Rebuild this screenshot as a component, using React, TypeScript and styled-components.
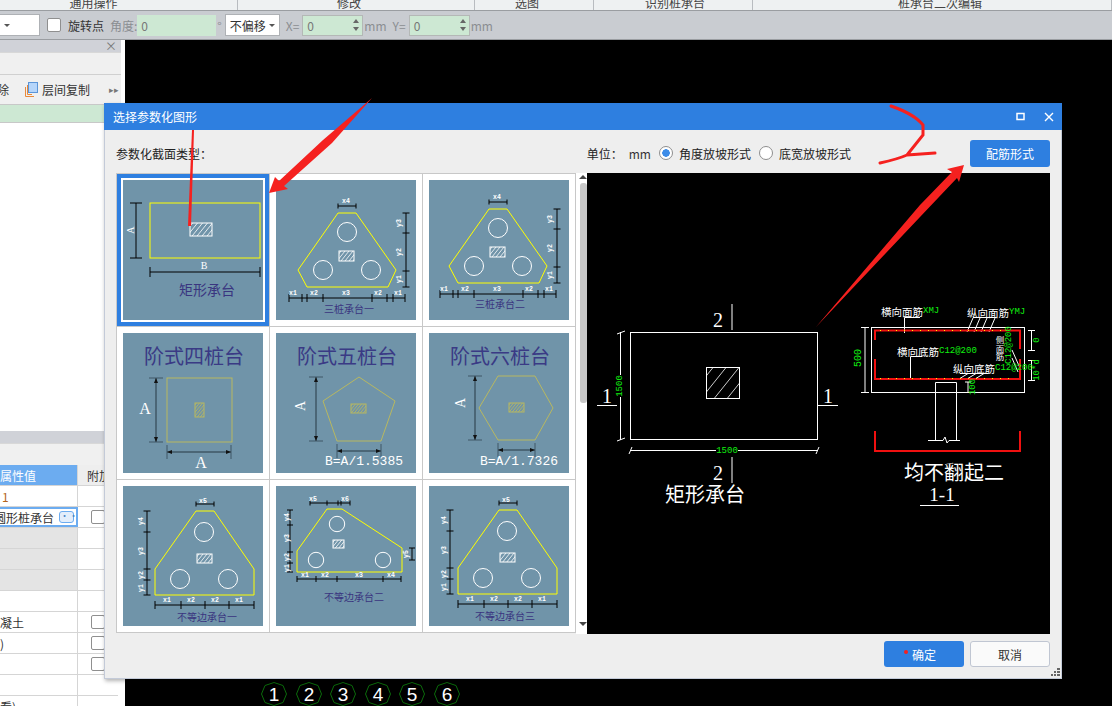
import React from 'react';
import styled, { createGlobalStyle } from 'styled-components';

const UI_FONT = `"Noto Sans CJK SC", "Liberation Sans", sans-serif`;
const MONO_FONT = `"Liberation Mono", "Noto Sans CJK SC", monospace`;
const SERIF_FONT = `"Liberation Serif", "Noto Sans CJK SC", serif`;
const CAD_GREEN = '#10f010';

const GlobalStyle = createGlobalStyle`
  html, body {
    margin: 0;
    background: #000;
    overflow: hidden;
  }
  * {
    box-sizing: border-box;
  }
`;

const Page = styled.div`
  position: relative;
  display: flex;
  flex-direction: column;
  width: 1112px;
  height: 706px;
  overflow: hidden;
  font-family: ${UI_FONT};
  font-size: 12px;
  color: #333;
  background: #000;
`;

/* ribbon strip, cut off by the top of the picture */
const Ribbon = styled.div`
  display: flex;
  flex: none;
  height: 11px;
  background: #eef1f2;
  border-bottom: 1px solid #9a9da1;
  overflow: hidden;
`;

const RibbonGroup = styled.div<{ $width: number; $padLeft?: number; $padRight?: number }>`
  display: flex;
  flex: none;
  align-items: flex-end;
  justify-content: center;
  width: ${({ $width }) => $width}px;
  height: 10px;
  padding-left: ${({ $padLeft }) => $padLeft ?? 0}px;
  padding-right: ${({ $padRight }) => $padRight ?? 0}px;
  line-height: 14px;
  border-right: 1px solid #b8bcc0;
  color: #444;
`;

const Toolbar = styled.div`
  display: flex;
  flex: none;
  align-items: center;
  height: 29px;
  background: #c9ccd1;
  border-bottom: 1px solid #9a9da1;
  color: #8b8e92;
`;

const Select = styled.div<{ $width: number; $left: number }>`
  display: flex;
  flex: none;
  align-items: center;
  justify-content: space-between;
  width: ${({ $width }) => $width}px;
  height: 22px;
  margin-left: ${({ $left }) => $left}px;
  padding: 0 4px;
  background: #fff;
  border: 1px solid #aeb1b5;
  color: #333;

  &::after {
    content: '';
    border-top: 3px solid #555;
    border-left: 3px solid transparent;
    border-right: 3px solid transparent;
  }
`;

const CheckBox = styled.span<{ $left?: number }>`
  display: block;
  flex: none;
  width: 14px;
  height: 14px;
  margin-left: ${({ $left }) => $left ?? 0}px;
  background: #fff;
  border: 1px solid #8f8f8f;
  border-radius: 2px;
`;

const ToolText = styled.span<{ $left: number; $dark?: boolean }>`
  flex: none;
  margin-left: ${({ $left }) => $left}px;
  color: ${({ $dark }) => ($dark ? '#333' : '#8b8e92')};
`;

const NumberInput = styled.div<{ $width: number; $left: number; $plain?: boolean }>`
  display: flex;
  flex: none;
  align-items: center;
  justify-content: space-between;
  width: ${({ $width }) => $width}px;
  height: 21px;
  margin-left: ${({ $left }) => $left}px;
  padding: 0 3px 0 4px;
  background: #cde8d3;
  border: ${({ $plain }) => ($plain ? '0' : '1px solid #b4b8b6')};
  color: #777;
`;

const Spinner = styled.span`
  display: flex;
  flex-direction: column;
  gap: 4px;

  &::before, &::after {
    content: '';
    border-left: 3px solid transparent;
    border-right: 3px solid transparent;
  }
  &::before {
    border-bottom: 4px solid #666;
  }
  &::after {
    border-top: 4px solid #666;
  }
`;

const Main = styled.div`
  display: flex;
  flex: 1;
  min-height: 0;
`;

const LeftPanel = styled.div`
  display: flex;
  flex: none;
  flex-direction: column;
  width: 125px;
  background: #fff;
  overflow: hidden;
`;

const PanelHeader = styled.div`
  display: flex;
  flex: none;
  align-items: center;
  justify-content: flex-end;
  width: 121px;
  height: 12px;
  padding-right: 4px;
  background: #d0d2d8;
  color: #777;
  font-size: 12px;
  line-height: 12px;
`;

const PanelBlank = styled.div<{ $height: number }>`
  flex: none;
  width: 121px;
  height: ${({ $height }) => $height}px;
  background: #f0f0f0;
  border-top: 1px solid #d8d8d8;
`;

const PanelTools = styled.div`
  display: flex;
  flex: none;
  align-items: center;
  width: 121px;
  height: 30px;
  background: #f0f0f0;
  border-top: 1px solid #d0d0d0;
`;

const ClippedText = styled.span`
  flex: none;
  margin-left: -3px;
`;

const CopyIcon = styled.svg`
  flex: none;
  margin: 0 4px 0 15px;
`;

const MoreArrows = styled.span`
  margin-right: 2px;
  color: #777;
  font-size: 9px;
`;

const GreenRow = styled.div`
  flex: none;
  width: 121px;
  height: 19px;
  background: #cde8d3;
  border-top: 1px solid #c8c8c8;
  border-bottom: 1px solid #c8c8c8;
`;

const ListArea = styled.div`
  flex: none;
  width: 121px;
  height: 308px;
  background: #fff;
`;

const TableRow = styled.div`
  display: flex;
  flex: none;
  width: 118px;
  height: 21px;
  border-bottom: 1px solid #d5d5d5;
`;

const ValueCell = styled.div<{ $gray?: boolean; $active?: boolean; $head?: boolean; $orange?: boolean }>`
  display: flex;
  flex: none;
  align-items: center;
  width: 78px;
  padding-left: ${({ $orange }) => ($orange ? 2 : 0)}px;
  background: ${({ $gray, $head }) => ($head ? '#6cacf0' : $gray ? '#e4e4e4' : '#fff')};
  border-right: 1px solid #d5d5d5;
  color: ${({ $head, $orange }) => ($head ? '#fff' : $orange ? '#b5651d' : '#333')};
  overflow: hidden;
  white-space: nowrap;
  ${({ $active }) => $active && 'border: 2px solid #6cacf0; border-left: 0; justify-content: flex-end; padding-right: 2px;'}
`;

const ExtraCell = styled.div<{ $head?: boolean }>`
  display: flex;
  flex: 1;
  align-items: center;
  padding-left: ${({ $head }) => ($head ? 9 : 13)}px;
  background: ${({ $head }) => ($head ? '#eeeeee' : '#fff')};
`;

const DotsButton = styled.span`
  flex: none;
  width: 15px;
  height: 12px;
  margin-left: 5px;
  background: #e3eefb;
  border: 1px solid #6cacf0;
  border-radius: 3px;
  color: #4a86c8;
  font-size: 9px;
  line-height: 7px;
  text-align: center;
`;

const Canvas = styled.div`
  display: flex;
  flex: 1;
  align-items: flex-end;
  gap: 8.6px;
  padding-left: 136px;
  background: #000;
`;

const BadgeSvg = styled.svg`
  display: block;
  flex: none;
  width: 26px;
  height: 24px;
`;

const Dialog = styled.div`
  position: absolute;
  left: 104px;
  top: 103px;
  display: flex;
  flex-direction: column;
  width: 958px;
  height: 576px;
  background: #eeeeee;
  border: 1px solid #c3cad8;
  border-top: 0;
  box-shadow: 1px 2px 4px rgba(0, 0, 0, 0.3);
`;

const TitleBar = styled.div`
  display: flex;
  flex: none;
  align-items: center;
  justify-content: space-between;
  height: 27px;
  margin: 0 -1px;
  padding: 0 8px 0 9px;
  background: #2e7fe0;
  color: #fff;
`;

const WindowButtons = styled.div`
  display: flex;
  align-items: center;
  gap: 19px;
`;

const DialogTop = styled.div`
  display: flex;
  flex: none;
  align-items: center;
  height: 43px;
  padding: 3px 11px 0;
  color: #222;
`;

const Spacer = styled.div`
  flex: 1;
`;

const RadioLabel = styled.span<{ $left: number }>`
  display: flex;
  align-items: center;
  gap: 6px;
  margin-left: ${({ $left }) => $left}px;
`;

const Radio = styled.span<{ $on?: boolean }>`
  display: block;
  flex: none;
  width: 14px;
  height: 14px;
  background: ${({ $on }) => ($on ? 'radial-gradient(circle, #3d8ce8 0 3.5px, #fff 4px)' : '#fff')};
  border: 1px solid #8e8e8e;
  border-radius: 50%;
`;

const Button = styled.button<{ $primary?: boolean; $left?: number; $height: number }>`
  flex: none;
  width: 80px;
  height: ${({ $height }) => $height}px;
  margin-left: ${({ $left }) => $left ?? 0}px;
  padding: 0;
  font-family: ${UI_FONT};
  font-size: 12px;
  color: ${({ $primary }) => ($primary ? '#fff' : '#333')};
  background: ${({ $primary }) => ($primary ? '#2e7fe0' : '#fafafa')};
  border: ${({ $primary }) => ($primary ? '0' : '1px solid #c0c6d2')};
  border-radius: 3px;
`;

const DialogContent = styled.div`
  display: flex;
  flex: none;
  height: 461px;
  padding: 0 11px;
`;

const ShapeGrid = styled.div`
  display: grid;
  flex: none;
  grid-template-columns: repeat(3, 153px);
  grid-auto-rows: 153px;
  align-content: start;
  width: 460px;
  height: 460px;
  background: #fff;
  border-top: 1px solid #c8c8c8;
  border-left: 1px solid #c8c8c8;
`;

const ShapeCell = styled.div<{ $selected?: boolean }>`
  padding: 6px 0 0 6px;
  border-right: 1px solid #c8c8c8;
  border-bottom: 1px solid #c8c8c8;
  box-shadow: ${({ $selected }) => ($selected ? 'inset 0 0 0 4px #2e7fe0' : 'none')};
`;

const ScrollTrack = styled.div`
  display: flex;
  flex: none;
  flex-direction: column;
  align-items: flex-end;
  width: 11px;
  background: #fff;
  padding-top: 2px;
`;

const ArrowUp = styled.span`
  align-self: center;
  margin-left: 3px;
  border-bottom: 4px solid #444;
  border-left: 4px solid transparent;
  border-right: 4px solid transparent;
`;

const ArrowDown = styled.span`
  align-self: center;
  margin-top: 219px;
  margin-left: 3px;
  border-top: 4px solid #444;
  border-left: 4px solid transparent;
  border-right: 4px solid transparent;
`;

const ScrollThumb = styled.div`
  width: 7px;
  height: 220px;
  margin-top: 4px;
  background: #c8c8c8;
  border-radius: 3px;
`;

const PreviewSvg = styled.svg`
  display: block;
  flex: none;
  width: 463px;
  height: 461px;
  background: #000;
`;

const DialogFooter = styled.div`
  position: relative;
  display: flex;
  flex: 1;
  align-items: flex-start;
  justify-content: flex-end;
  padding: 7px 11px 0;
`;

const ResizeGrip = styled.svg`
  position: absolute;
  right: 1px;
  bottom: 1px;
  width: 9px;
  height: 9px;
`;

const Annotations = styled.svg`
  position: absolute;
  inset: 0;
  width: 1112px;
  height: 706px;
  pointer-events: none;
`;

const ThumbSvg = styled.svg`
  display: block;
  width: 140px;
  height: 140px;
  background: #7094a9;
`;

const Label = styled.text<{ $size: number; $color?: string; $weight?: number; $family?: string; $anchor?: string }>`
  font-family: ${({ $family }) => $family ?? UI_FONT};
  font-size: ${({ $size }) => $size}px;
  font-weight: ${({ $weight }) => $weight ?? 400};
  fill: ${({ $color }) => $color ?? '#fff'};
  text-anchor: ${({ $anchor }) => $anchor ?? 'middle'};
  dominant-baseline: central;
`;

const VerticalLabel = styled(Label)`
  writing-mode: vertical-rl;
  text-orientation: upright;
  letter-spacing: 0;
`;

const Tiny = ({ x, y, t, rot }: { x: number; y: number; t: string; rot?: boolean }) => (
  <Label x={x} y={y} $size={6.5} $weight={700} $family={MONO_FONT} transform={rot ? `rotate(-90 ${x} ${y})` : undefined}>
    {t}
  </Label>
);

const CadNum = ({ x, y, t, size = 9 }: { x: number; y: number; t: string; size?: number }) => (
  <Label x={x} y={y} $size={size} $color={CAD_GREEN} $family={MONO_FONT} transform={`rotate(-90 ${x} ${y})`}>
    {t}
  </Label>
);

const HDim = ({ y, xs, h = 4, color = '#000' }: { y: number; xs: number[]; h?: number; color?: string }) => (
  <g stroke={color} fill="none">
    <line x1={xs[0]} x2={xs[xs.length - 1]} y1={y} y2={y} />
    {xs.map((x) => <line key={x} x1={x} x2={x} y1={y - h} y2={y + h} />)}
  </g>
);

const VDim = ({ x, ys, h = 4, color = '#000' }: { x: number; ys: number[]; h?: number; color?: string }) => (
  <g stroke={color} fill="none">
    <line x1={x} x2={x} y1={ys[0]} y2={ys[ys.length - 1]} />
    {ys.map((y) => <line key={y} x1={x - h} x2={x + h} y1={y} y2={y} />)}
  </g>
);

const Hatch = ({ x, y, w, h, color = '#fff', step = 5 }: { x: number; y: number; w: number; h: number; color?: string; step?: number }) => {
  const lines: number[] = [];
  for (let i = step / 2; i < w + h; i += step) lines.push(i);
  return (
    <g>
      <svg x={x} y={y} width={w} height={h}>
        {lines.map((i) => <line key={i} x1={i} y1={0} x2={i - h * 0.8} y2={h} stroke={color} strokeWidth={0.8} />)}
      </svg>
      <rect x={x} y={y} width={w} height={h} fill="none" stroke={color} />
    </g>
  );
};

const Piles = ({ list, r = 9.5 }: { list: number[][]; r?: number }) => (
  <g fill="none" stroke="#fff">
    {list.map(([x, y]) => <circle key={x} cx={x} cy={y} r={r} />)}
  </g>
);

const Outline = ({ points, color = '#ffff00' }: { points: string; color?: string }) => (
  <polygon points={points} fill="none" stroke={color} />
);

/* dark dimension with arrow heads, used by the 阶式 pictures */
const ArrowV = ({ x, y1, y2 }: { x: number; y1: number; y2: number }) => (
  <g>
    <line x1={x} x2={x} y1={y1} y2={y2} stroke="#3f5766" strokeWidth={1.5} />
    <line x1={x - 7} x2={x + 7} y1={y1} y2={y1} stroke="#3f5766" />
    <line x1={x - 7} x2={x + 7} y1={y2} y2={y2} stroke="#3f5766" />
    <polygon points={`${x},${y1} ${x - 2},${y1 + 5} ${x + 2},${y1 + 5}`} fill="#111" />
    <polygon points={`${x},${y2} ${x - 2},${y2 - 5} ${x + 2},${y2 - 5}`} fill="#111" />
  </g>
);

const ArrowH = ({ y, x1, x2 }: { y: number; x1: number; x2: number }) => (
  <g>
    <line x1={x1} x2={x2} y1={y} y2={y} stroke="#3f5766" strokeWidth={1.5} />
    <line x1={x1} x2={x1} y1={y - 7} y2={y + 7} stroke="#3f5766" />
    <line x1={x2} x2={x2} y1={y - 7} y2={y + 7} stroke="#3f5766" />
    <polygon points={`${x1},${y} ${x1 + 5},${y - 2} ${x1 + 5},${y + 2}`} fill="#111" />
    <polygon points={`${x2},${y} ${x2 - 5},${y - 2} ${x2 - 5},${y + 2}`} fill="#111" />
  </g>
);

const StepTitle = ({ children }: { children: string }) => (
  <Label x={71} y={22} $size={20} $color="#3a3a85">{children}</Label>
);

const RectThumb = () => (
  <ThumbSvg>
    <rect x={27} y={23} width={110} height={55} fill="none" stroke="#ffff00" />
    <Hatch x={67} y={43} w={22} h={13} />
    <VDim x={13} ys={[23, 78]} h={6} />
    <Label x={7} y={50} $size={10} $family={SERIF_FONT} transform="rotate(-90 7 50)">A</Label>
    <HDim y={92} xs={[27, 137]} h={5} />
    <Label x={81} y={85} $size={10} $family={SERIF_FONT}>B</Label>
    <Label x={84} y={109} $size={14} $color="#3a3580">矩形承台</Label>
  </ThumbSvg>
);

const ThreePile = ({ dx, dy, title, titleY }: { dx: number; dy: number; title: string; titleY: number }) => (
  <ThumbSvg>
    <g transform={`translate(${dx} ${dy})`}>
      <Outline points="62,33 80,33 120,90 112,107 31,107 22,90" />
      <Piles list={[[71, 52], [47, 90], [95, 90]]} />
      <Hatch x={63} y={71} w={15} h={10} step={4} />
      <HDim y={26} xs={[62, 80]} h={2.5} />
      <Tiny x={70} y={21} t="x4" />
      <VDim x={130} ys={[33, 53, 91, 107]} h={3.5} />
      <Tiny x={123} y={43} t="y3" rot />
      <Tiny x={123} y={72} t="y2" rot />
      <Tiny x={123} y={99} t="y1" rot />
      <HDim y={118} xs={[13, 26, 31, 47, 96, 111, 117, 129]} h={4} />
      <Tiny x={17} y={113} t="x1" />
      <Tiny x={38} y={113} t="x2" />
      <Tiny x={70} y={113} t="x3" />
      <Tiny x={102} y={113} t="x2" />
      <Tiny x={122} y={113} t="x1" />
    </g>
    <Label x={73 + dx} y={titleY} $size={10} $color="#3a3580">{title}</Label>
  </ThumbSvg>
);

const StepFour = () => (
  <ThumbSvg>
    <StepTitle>阶式四桩台</StepTitle>
    <rect x={44} y={45} width={65} height={64} fill="none" stroke="#b8b860" />
    <Hatch x={72} y={70} w={9} h={14} color="#b8b860" step={3} />
    <ArrowV x={33} y1={45} y2={109} />
    <ArrowH y={119} x1={44} x2={108} />
    <Label x={22} y={75} $size={16} $family={SERIF_FONT}>A</Label>
    <Label x={78} y={129} $size={16} $family={SERIF_FONT}>A</Label>
  </ThumbSvg>
);

const StepFive = () => (
  <ThumbSvg>
    <StepTitle>阶式五桩台</StepTitle>
    <Outline points="83,44 119,68 105,108 61,108 47,68" color="#b8b860" />
    <Hatch x={75} y={71} w={15} h={9} color="#b8b860" step={3} />
    <ArrowV x={40} y1={44} y2={108} />
    <ArrowH y={118} x1={61} x2={105} />
    <Label x={24} y={73} $size={14} $family={SERIF_FONT} transform="rotate(-90 24 73)">A</Label>
    <Label x={88} y={128} $size={13} $family={MONO_FONT}>B=A/1.5385</Label>
  </ThumbSvg>
);

const StepSix = () => (
  <ThumbSvg>
    <StepTitle>阶式六桩台</StepTitle>
    <Outline points="69,43 106,43 124,75 106,107 69,107 50,75" color="#b8b860" />
    <Hatch x={80} y={70} w={15} h={9} color="#b8b860" step={3} />
    <ArrowV x={46} y1={43} y2={107} />
    <ArrowH y={117} x1={69} x2={106} />
    <Label x={31} y={70} $size={14} $family={SERIF_FONT} transform="rotate(-90 31 70)">A</Label>
    <Label x={90} y={128} $size={13} $family={MONO_FONT}>B=A/1.7326</Label>
  </ThumbSvg>
);

const UnequalOne = ({ dx, dy, title, titleX, titleY }: { dx: number; dy: number; title: string; titleX: number; titleY: number }) => (
  <ThumbSvg>
    <g transform={`translate(${dx} ${dy})`}>
      <Outline points="73,25 91,25 131,83 131,109 32,109 32,83" />
      <Piles list={[[81, 46], [57, 93], [105, 93]]} />
      <Hatch x={74} y={68} w={15} h={9} step={4} />
      <HDim y={18} xs={[73, 91]} h={2.5} />
      <Tiny x={80} y={15} t="x5" />
      <VDim x={24} ys={[25, 46, 83, 94, 109]} h={3.5} />
      <Tiny x={18} y={35} t="y4" rot />
      <Tiny x={18} y={65} t="y3" rot />
      <Tiny x={18} y={89} t="y2" rot />
      <Tiny x={18} y={102} t="y1" rot />
      <HDim y={119} xs={[32, 58, 82, 106, 131]} h={4} />
      <Tiny x={44} y={114} t="x1" />
      <Tiny x={68} y={114} t="x2" />
      <Tiny x={92} y={114} t="x2" />
      <Tiny x={116} y={114} t="x1" />
    </g>
    <Label x={titleX} y={titleY} $size={10} $color="#3a3580">{title}</Label>
  </ThumbSvg>
);

const UnequalTwo = () => (
  <ThumbSvg>
    <Outline points="51,23 66,23 126,62 126,86 21,86 21,65" />
    <Piles list={[[61, 38], [40, 74], [107, 74]]} r={7.7} />
    <Hatch x={57} y={54} w={11} h={8} step={3.5} />
    <HDim y={17} xs={[34, 51, 62, 65, 74]} h={2.5} />
    <Tiny x={37} y={13} t="x5" />
    <Tiny x={69} y={13} t="x6" />
    <VDim x={14} ys={[24, 39, 66, 77, 86]} h={3} />
    <Tiny x={11} y={31} t="y4" rot />
    <Tiny x={11} y={52} t="y3" rot />
    <Tiny x={11} y={71} t="y2" rot />
    <Tiny x={11} y={82} t="y1" rot />
    <VDim x={136} ys={[62, 74]} h={3} />
    <Tiny x={130} y={68} t="y5" rot />
    <HDim y={93} xs={[21, 40, 61, 107, 125]} h={3} />
    <Tiny x={29} y={89} t="x1" />
    <Tiny x={49} y={89} t="x2" />
    <Tiny x={83} y={89} t="x3" />
    <Tiny x={115} y={89} t="x4" />
    <Label x={78} y={110} $size={10} $color="#3a3580">不等边承台二</Label>
  </ThumbSvg>
);

const HexBadge = ({ n }: { n: number }) => (
  <BadgeSvg>
    <polygon points="13,0.5 22,3.5 25.5,12 22,20.5 13,23.5 4,20.5 0.5,12 4,3.5" fill="none" stroke="#0b6b0b" />
    <Label x={13} y={12.5} $size={19} $family={`"Liberation Sans", sans-serif`}>{n}</Label>
  </BadgeSvg>
);

const Preview = () => (
  <PreviewSvg viewBox="587 173 463 461">
    <g stroke="#fff" fill="none">
      <rect x={630.5} y={332.5} width={187} height={107} />
      <line x1={732} x2={732} y1={304} y2={330} />
      <line x1={732} x2={732} y1={457} y2={483} />
      <line x1={597} x2={617} y1={405.5} y2={405.5} />
      <line x1={818} x2={838} y1={405.5} y2={405.5} />
      <line x1={620.5} x2={620.5} y1={332} y2={440} />
      <line x1={630} x2={818} y1={450.5} y2={450.5} />
      <line x1={617} x2={625} y1={334} y2={331} />
      <line x1={617} x2={625} y1={441} y2={438} />
      <line x1={629} x2={632} y1={454} y2={447} />
      <line x1={816} x2={819} y1={454} y2={447} />
    </g>
    <Hatch x={706.5} y={367.5} w={33} h={31} step={13} />
    <rect x={716} y={445} width={22} height={11} fill="#000" />
    <rect x={615} y={375} width={11} height={22} fill="#000" />
    <Label x={727} y={451} $size={9} $color={CAD_GREEN} $family={MONO_FONT}>1500</Label>
    <CadNum x={620} y={386} t="1500" />
    <Label x={718} y={320} $size={20} $family={SERIF_FONT}>2</Label>
    <Label x={718} y={473} $size={20} $family={SERIF_FONT}>2</Label>
    <Label x={607} y={396} $size={20} $family={SERIF_FONT}>1</Label>
    <Label x={828} y={396} $size={20} $family={SERIF_FONT}>1</Label>
    <Label x={705} y={493} $size={20}>矩形承台</Label>

    <g stroke="#fff" fill="none">
      <rect x={871.5} y={327.5} width={153} height={65} />
      <path d="M935.5 440V382.5H956.5V440" />
      <path d="M928 440.5H943L945 437L947 443L949 440.5H960" />
      <path d="M861 327.5H869M865 327.5V392.5M861 392.5H869" />
      <path d="M920 317.5H904.5V333" />
      <path d="M973 317.5H996M973 318L967 332M980 318L974 332M987 318L981 332M995 318L989 332" />
      <path d="M922 356.5H910.5V380" />
      <path d="M960 373.5H988M968 373.5L959 379M976 373.5L967 379M984 373.5L975 379" />
      <path d="M968 382V392M965 382H971" />
      <path d="M1031.5 330V350M1028 330.5H1035M1028 350.5H1035" />
      <path d="M1031.5 360V380M1028 360.5H1035M1028 380.5H1035" />
      <path d="M1012 350L1020 368M1012 358L1018 372" />
      <line x1={920} x2={959} y1={505.5} y2={505.5} />
    </g>
    <path d="M875 340V330.5H1020V349M875 359V379H1020V359" fill="none" stroke="#f01010" strokeWidth={2} />
    <path d="M875 431V451H1020V431" fill="none" stroke="#f01010" strokeWidth={2} />
    <path d="M880 330.5H1016M880 378.5H1016" fill="none" stroke="#ffff00" strokeDasharray="1 7" />
    <CadNum x={858} y={358} t="500" size={10} />
    <Label x={881} y={311} $size={10.5} $anchor="start">横向面筋<tspan fill={CAD_GREEN} fontFamily={MONO_FONT} fontSize={9}>XMJ</tspan></Label>
    <Label x={967} y={312} $size={10.5} $anchor="start">纵向面筋<tspan fill={CAD_GREEN} fontFamily={MONO_FONT} fontSize={9}>YMJ</tspan></Label>
    <Label x={897} y={351} $size={10.5} $anchor="start">横向底筋<tspan fill={CAD_GREEN} fontFamily={MONO_FONT} fontSize={9}>C12@200</tspan></Label>
    <Label x={953} y={368} $size={10.5} $anchor="start">纵向底筋<tspan fill={CAD_GREEN} fontFamily={MONO_FONT} fontSize={9}>C12@200</tspan></Label>
    <VerticalLabel x={1000} y={336} $size={8.5} $anchor="start">侧面筋</VerticalLabel>
    <CadNum x={1009} y={345} t="C12@200" />
    <CadNum x={973} y={387} t="100" />
    <CadNum x={1037} y={340} t="0" />
    <CadNum x={1037} y={370} t="10*d" />
    <Label x={954} y={471} $size={20}>均不翻起二</Label>
    <Label x={942} y={494} $size={19} $family={SERIF_FONT}>1-1</Label>
  </PreviewSvg>
);

const tableRows = [
  { value: '1', orange: true },
  { value: '圆形桩承台', active: true, check: true },
  { gray: true },
  { gray: true },
  { gray: true },
  {},
  { value: '凝土', check: true },
  { value: ')', check: true },
  { check: true },
  {},
  { value: '看)' },
];

export default function App() {
  return (
    <Page>
      <GlobalStyle />
      <Ribbon>
        <RibbonGroup $width={238} $padRight={50}>通用操作</RibbonGroup>
        <RibbonGroup $width={237} $padRight={14}>修改</RibbonGroup>
        <RibbonGroup $width={119} $padRight={14}>选图</RibbonGroup>
        <RibbonGroup $width={159} $padLeft={4}>识别桩承台</RibbonGroup>
        <RibbonGroup $width={359} $padLeft={16}>桩承台二次编辑</RibbonGroup>
      </Ribbon>
      <Toolbar>
        <Select $width={41} $left={-1} />
        <CheckBox $left={7} />
        <ToolText $left={7} $dark>旋转点</ToolText>
        <ToolText $left={6}>角度:</ToolText>
        <NumberInput $width={79} $left={0} $plain>0</NumberInput>
        <ToolText $left={1}>°</ToolText>
        <Select $width={55} $left={3}>不偏移</Select>
        <ToolText $left={6}>X=</ToolText>
        <NumberInput $width={61} $left={3}>0<Spinner /></NumberInput>
        <ToolText $left={1}>mm</ToolText>
        <ToolText $left={6}>Y=</ToolText>
        <NumberInput $width={61} $left={3}>0<Spinner /></NumberInput>
        <ToolText $left={1}>mm</ToolText>
      </Toolbar>
      <Main>
        <LeftPanel>
          <PanelHeader>×</PanelHeader>
          <PanelBlank $height={22} />
          <PanelTools>
            <ClippedText>除</ClippedText>
            <CopyIcon width="14" height="16">
              <path d="M1.5 5V14.5H10" fill="none" stroke="#e88a3c" />
              <path d="M3.5 3V12.5H8" fill="none" stroke="#e88a3c" />
              <rect x="4.5" y="0.5" width="9" height="10" fill="#b5d5fa" stroke="#5b95d8" />
            </CopyIcon>
            层间复制
            <Spacer />
            <MoreArrows>▸▸</MoreArrows>
          </PanelTools>
          <GreenRow />
          <ListArea />
          <PanelHeader />
          <PanelBlank $height={22} />
          <TableRow>
            <ValueCell $head>属性值</ValueCell>
            <ExtraCell $head>附加</ExtraCell>
          </TableRow>
          {tableRows.map((row, i) => (
            <TableRow key={i}>
              <ValueCell $gray={row.gray} $active={row.active} $orange={row.orange}>
                {row.value}
                {row.active && <DotsButton>···</DotsButton>}
              </ValueCell>
              <ExtraCell>{row.check && <CheckBox />}</ExtraCell>
            </TableRow>
          ))}
        </LeftPanel>
        <Canvas>
          {[1, 2, 3, 4, 5, 6].map((n) => <HexBadge key={n} n={n} />)}
        </Canvas>
      </Main>

      <Dialog>
        <TitleBar>
          选择参数化图形
          <WindowButtons>
            <svg width="9" height="9"><rect x="1" y="1.5" width="7" height="6" fill="none" stroke="#fff" strokeWidth="1.5" /></svg>
            <svg width="10" height="10"><path d="M1 1L9 9M9 1L1 9" stroke="#fff" strokeWidth="1.4" /></svg>
          </WindowButtons>
        </TitleBar>
        <DialogTop>
          参数化截面类型：
          <Spacer />
          单位：
          <ToolText $left={6} $dark>mm</ToolText>
          <RadioLabel $left={8}><Radio $on />角度放坡形式</RadioLabel>
          <RadioLabel $left={8}><Radio />底宽放坡形式</RadioLabel>
          <Button $primary $height={27} $left={119}>配筋形式</Button>
        </DialogTop>
        <DialogContent>
          <ShapeGrid>
            <ShapeCell $selected><RectThumb /></ShapeCell>
            <ShapeCell><ThreePile dx={0} dy={0} title="三桩承台一" titleY={128} /></ShapeCell>
            <ShapeCell><ThreePile dx={-2} dy={-4} title="三桩承台二" titleY={123} /></ShapeCell>
            <ShapeCell><StepFour /></ShapeCell>
            <ShapeCell><StepFive /></ShapeCell>
            <ShapeCell><StepSix /></ShapeCell>
            <ShapeCell><UnequalOne dx={0} dy={0} title="不等边承台一" titleX={84} titleY={130} /></ShapeCell>
            <ShapeCell><UnequalTwo /></ShapeCell>
            <ShapeCell><UnequalOne dx={-3} dy={-1} title="不等边承台三" titleX={76} titleY={129} /></ShapeCell>
          </ShapeGrid>
          <ScrollTrack>
            <ArrowUp />
            <ScrollThumb />
            <ArrowDown />
          </ScrollTrack>
          <Preview />
        </DialogContent>
        <DialogFooter>
          <Button $primary $height={26}>确定</Button>
          <Button $height={26} $left={6}>取消</Button>
          <ResizeGrip viewBox="0 0 9 9">
            <path d="M6 0h3v2H6zM3 3h2v2H3zM6 3h3v2H6zM0 6h2v2H0zM3 6h2v2H3zM6 6h3v2H6z" fill="#666" />
          </ResizeGrip>
        </DialogFooter>
      </Dialog>

      <Annotations>
        <polygon points="372,98 332,143 284,186 288,189 269,193 275,177 279,181 323,140" fill="#f5211f" />
        <polygon points="192,130 194,130 191,226 188,226" fill="#f5211f" />
        <polygon points="816,327 920,205 952,172 947,169 964,165 959,182 957,178 920,217" fill="#f5211f" />
        <path d="M891 106C905 111 916 116 923 125V135L907 155C898 159 889 161 880 163M907 155L935 153" fill="none" stroke="#f5211f" strokeWidth={3} strokeLinecap="round" />
        <circle cx={906} cy={652} r={2} fill="#f5211f" />
      </Annotations>
    </Page>
  );
}
